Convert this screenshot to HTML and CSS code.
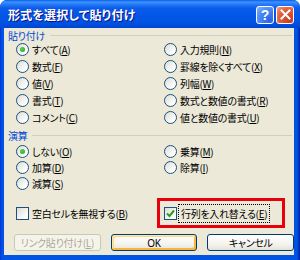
FILE: index.html
```html
<!DOCTYPE html>
<html>
	<head>
		<meta charset="utf-8">
		<title>形式を選択して貼り付け</title>
		<link rel="stylesheet" href="styles.css">
	</head>
	<body>
		<div class="window">
			<div class="titlebar">
				<span class="title">形式を選択して貼り付け</span>
				<span class="tb help">?</span>
				<span class="tb close">
					<svg width="11" height="11" viewBox="0 0 11 11"><path d="M1.5 1.5L9.5 9.5M9.5 1.5L1.5 9.5" stroke="#fff" stroke-width="2" stroke-linecap="square"/></svg>
				</span>
			</div>
			<div class="frame">
				<div class="ghead">貼り付け</div>
				<div class="opts">
					<label class="opt"><span class="radio on"></span>すべて(<u>A</u>)</label>
					<label class="opt"><span class="radio"></span>入力規則(<u>N</u>)</label>
					<label class="opt"><span class="radio"></span>数式(<u>F</u>)</label>
					<label class="opt"><span class="radio"></span>罫線を除くすべて(<u>X</u>)</label>
					<label class="opt"><span class="radio"></span>値(<u>V</u>)</label>
					<label class="opt"><span class="radio"></span>列幅(<u>W</u>)</label>
					<label class="opt"><span class="radio"></span>書式(<u>T</u>)</label>
					<label class="opt"><span class="radio"></span>数式と数値の書式(<u>R</u>)</label>
					<label class="opt"><span class="radio"></span>コメント(<u>C</u>)</label>
					<label class="opt"><span class="radio"></span>値と数値の書式(<u>U</u>)</label>
				</div>
				<div class="ghead second">演算</div>
				<div class="opts calc">
					<label class="opt"><span class="radio on"></span>しない(<u>O</u>)</label>
					<label class="opt"><span class="radio"></span>乗算(<u>M</u>)</label>
					<label class="opt"><span class="radio"></span>加算(<u>D</u>)</label>
					<label class="opt"><span class="radio"></span>除算(<u>I</u>)</label>
					<label class="opt"><span class="radio"></span>減算(<u>S</u>)</label>
				</div>
				<div class="checks">
					<label class="chk"><span class="box"></span>空白セルを無視する(<u>B</u>)</label>
					<div class="mark">
						<label class="chk"><span class="box on"><svg width="9" height="9" viewBox="0 0 9 9"><path d="M1 4.5L3.5 7L8 1.5" fill="none" stroke="#21a121" stroke-width="2"/></svg></span><span class="focus">行列を入れ替える(<u>E</u>)</span></label>
					</div>
				</div>
				<div class="buttons">
					<span class="btn off">リンク貼り付け(<u>L</u>)</span>
					<span class="btn def">OK</span>
					<span class="btn">キャンセル</span>
				</div>
			</div>
		</div>
	</body>
</html>
```
FILE: styles.css
```css
*{
	box-sizing: border-box;
}
body{
	margin: 0;
	background: #fff;
	font-family: "Noto Sans CJK JP", "Noto Sans", sans-serif;
	font-size: 10px;
	font-feature-settings: "palt";
	letter-spacing: -0.3px;
	color: #000;
}
.window{
	width: 300px;
	height: 260px;
	display: flex;
	flex-direction: column;
	border-radius: 7px 7px 0 0;
	overflow: hidden;
	background: linear-gradient(90deg, #0831d9, #0054e3 2px, #0054e3 calc(100% - 3px), #001ea0);
}
.titlebar{
	height: 28px;
	flex: none;
	display: flex;
	align-items: center;
	padding: 1px 6px 0 8px;
	background: linear-gradient(180deg, #0a5ee8 0, #3d93ff 2px, #2a7df8 4px, #0b5de9 8px, #0256e6 16px, #0053e3 22px, #0049d6 27px, #0040c8 28px);
}
.title{
	flex: 1;
	color: #fff;
	font-size: 12px;
	font-weight: bold;
	letter-spacing: 0.2px;
	text-shadow: 1px 1px #0f1089;
}
.tb{
	width: 18px;
	height: 18px;
	margin-left: 2px;
	border: 1px solid #fff;
	border-radius: 3px;
	display: flex;
	align-items: center;
	justify-content: center;
	color: #fff;
	font-family: "Liberation Sans", sans-serif;
	font-weight: bold;
	font-size: 14px;
	letter-spacing: 0;
}
.help{
	background: radial-gradient(circle at 80% 80%, #2a62e8, #4a8af8 60%, #8cb6ff);
}
.close{
	background: radial-gradient(circle at 80% 80%, #c63c1a, #e2603c 60%, #f39c80);
}
.frame{
	flex: 1;
	margin: 0 6px 5px 4px;
	background: #ece9d8;
	padding: 0 0 0 4px;
	display: flex;
	flex-direction: column;
}
.ghead{
	height: 12px;
	display: flex;
	align-items: center;
	color: #0046d5;
	font-size: 10px;
	margin-top: 1px;
}
.ghead::after{
	content: "";
	flex: 1;
	height: 1px;
	background: #d0d0bf;
	margin: 0 2px 0 5px;
}
.ghead.second{
	margin-top: 3px;
}
.opts{
	display: grid;
	grid-template-columns: 148px 1fr;
	grid-auto-rows: 17px;
	padding-left: 8px;
}
.opts.calc{
	grid-auto-rows: 16px;
	margin-top: 2px;
}
.opt, .chk{
	display: flex;
	align-items: center;
	white-space: nowrap;
}
.radio{
	width: 13px;
	height: 13px;
	border-radius: 50%;
	border: 1px solid #1c5180;
	background: linear-gradient(135deg, #dcdcd5, #fff 80%);
	margin-right: 3px;
	display: flex;
	align-items: center;
	justify-content: center;
}
.radio.on::after{
	content: "";
	width: 5px;
	height: 5px;
	border-radius: 50%;
	background: radial-gradient(circle at 40% 40%, #55d451, #21a121);
}
u{
	text-decoration: underline;
	text-underline-offset: 1px;
}
.checks{
	display: flex;
	align-items: center;
	margin-top: 7px;
	padding-left: 8px;
}
.checks > .chk{
	width: 141px;
}
.box{
	width: 13px;
	height: 13px;
	border: 1px solid #1c5180;
	background: linear-gradient(135deg, #dcdcd5, #fff 80%);
	margin-right: 3px;
	display: flex;
	align-items: center;
	justify-content: center;
}
.mark{
	width: 128px;
	height: 30px;
	border: 3px solid #e8000c;
	display: flex;
	align-items: center;
	padding-left: 4px;
}
.focus{
	outline: 1px dotted #000;
	outline-offset: 1px;
	padding: 0 1px;
}
.buttons{
	display: flex;
	gap: 10px;
	margin-top: 6px;
	padding-left: 6px;
}
.btn{
	width: 87px;
	height: 17px;
	border: 1px solid #003c74;
	border-radius: 3px;
	background: linear-gradient(180deg, #fff, #f4f3ee 60%, #e3e2da);
	display: flex;
	align-items: center;
	justify-content: center;
	font-size: 10px;
}
.btn.def{
	box-shadow: inset 1px 1px #fee5a4, inset -1px -1px #f7b740, inset 2px 2px #fdd889, inset -2px -2px #f8b33b;
	font-family: "Noto Sans", sans-serif;
}
.btn.off{
	border-color: #c9c7ba;
	background: #f5f4ea;
	color: #aca899;
}
```
